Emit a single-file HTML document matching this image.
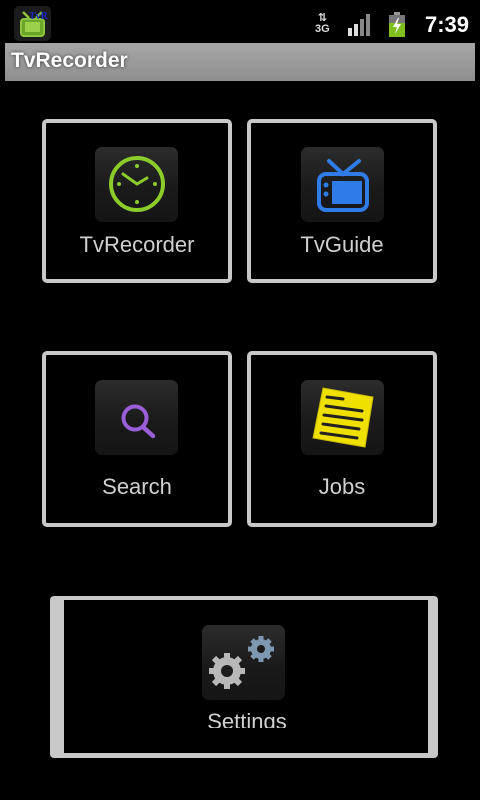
<!DOCTYPE html>
<html><head><meta charset="utf-8"><style>
*{margin:0;padding:0;box-sizing:border-box}
body{width:480px;height:800px;background:#000;position:relative;overflow:hidden;font-family:"Liberation Sans","DejaVu Sans",sans-serif}
.abs{position:absolute}
.box{position:absolute;border:4px solid #c8c8c8;border-radius:5px;background:#000}
.tile{position:absolute;width:83px;height:75px;border-radius:7px;background:linear-gradient(#2c2c2c,#1a1a1a 55%,#151515)}
.lbl{position:absolute;color:#d0d0d0;font-size:22px;text-align:center;width:190px}
</style></head><body>
<div class="abs" style="left:14px;top:6px;width:37px;height:35px;border-radius:5px;background:#1c1c1c"></div>
<svg class="abs" style="left:14px;top:6px" width="37" height="35" viewBox="0 0 37 35">
<path d="M9 6 L15 12 M28 6 L22 12" stroke="#8cc63f" stroke-width="2.5"/>
<rect x="7" y="13" width="23" height="17" rx="3" fill="#6aa52a" stroke="#8cc63f" stroke-width="2"/>
<rect x="11" y="16" width="15" height="10" fill="#9ad04a"/>
<text x="15" y="13" font-size="10" font-weight="bold" fill="#1a2cc8" font-family="Liberation Serif">TvR</text>
</svg>
<div class="abs" style="left:315px;top:13px;color:#ddd;font-size:11px;font-weight:bold;line-height:11px;text-align:center">⇅<br>3G</div>
<svg class="abs" style="left:348px;top:14px" width="25" height="22"><rect x="0" y="14" width="4" height="8" fill="#ddd"/><rect x="6" y="10" width="4" height="12" fill="#ddd"/><rect x="12" y="5" width="4" height="17" fill="#888"/><rect x="18" y="0" width="4" height="22" fill="#888"/></svg>
<svg class="abs" style="left:389px;top:12px" width="16" height="25"><rect x="5" y="0" width="6" height="3" fill="#999"/><rect x="0" y="3" width="16" height="22" fill="#7fbf1f"/><rect x="0" y="3" width="16" height="8" fill="#777"/><path d="M9 6 L4 15 L8 15 L6 22 L12 12 L8 12 L10 6Z" fill="#fff"/></svg>
<div class="abs" style="left:425px;top:12px;color:#fff;font-size:22px;font-weight:bold">7:39</div>
<div class="abs" style="left:5px;top:43px;width:470px;height:38px;background:linear-gradient(#a6a6a6,#8e8e8e);"></div>
<div class="abs" style="left:11px;top:49px;color:#fff;font-size:21px;font-weight:bold;text-shadow:0 0 3px #333">TvRecorder</div>

<div class="box" style="left:42px;top:119px;width:190px;height:164px"></div>
<div class="box" style="left:247px;top:119px;width:190px;height:164px"></div>
<div class="box" style="left:42px;top:351px;width:190px;height:176px"></div>
<div class="box" style="left:247px;top:351px;width:190px;height:176px"></div>
<div class="abs" style="left:50px;top:596px;width:388px;height:162px;background:#c8c8c8;border-radius:4px"></div>
<div class="abs" style="left:64px;top:600px;width:364px;height:153px;background:#000"></div>

<div class="tile" style="left:95px;top:147px"></div>
<svg class="abs" style="left:95px;top:147px" width="83" height="75">
<circle cx="42" cy="37" r="26" fill="none" stroke="#8ccc2a" stroke-width="4"/>
<circle cx="42" cy="19" r="2" fill="#8ccc2a"/><circle cx="42" cy="55" r="2" fill="#8ccc2a"/><circle cx="24" cy="37" r="2" fill="#8ccc2a"/><circle cx="60" cy="37" r="2" fill="#8ccc2a"/>
<path d="M28 27 L42 37 L52 31" stroke="#8ccc2a" stroke-width="3" fill="none" stroke-linecap="round"/>
</svg>
<div class="lbl" style="left:42px;top:232px">TvRecorder</div>

<div class="tile" style="left:301px;top:147px"></div>
<svg class="abs" style="left:301px;top:147px" width="83" height="75">
<path d="M28 14 L42 27 L58 14" stroke="#2f7ce8" stroke-width="4" fill="none" stroke-linecap="round"/>
<rect x="18" y="27" width="48" height="36" rx="7" fill="none" stroke="#2f7ce8" stroke-width="4"/>
<rect x="31" y="34" width="30" height="23" fill="#2f7ce8"/>
<circle cx="25" cy="38" r="2.5" fill="#2f7ce8"/><circle cx="25" cy="47" r="2.5" fill="#2f7ce8"/>
</svg>
<div class="lbl" style="left:247px;top:232px">TvGuide</div>

<div class="tile" style="left:95px;top:380px"></div>
<svg class="abs" style="left:95px;top:380px" width="83" height="75">
<circle cx="40" cy="38" r="11.5" fill="none" stroke="#9a5ed8" stroke-width="4"/>
<path d="M48 47 L58 56" stroke="#9a5ed8" stroke-width="4.5" stroke-linecap="round"/>
</svg>
<div class="lbl" style="left:42px;top:474px">Search</div>

<div class="tile" style="left:301px;top:380px"></div>
<svg class="abs" style="left:301px;top:380px" width="83" height="75">
<path d="M22 8 L72 17 L64 67 L12 58Z" fill="#f0e000" stroke="#c8b800" stroke-width="1"/>
<g stroke="#222" stroke-width="3" stroke-linecap="round"><path d="M26 17 L42 19"/><path d="M25 26 L61 31"/><path d="M23 35 L61 40"/><path d="M22 44 L58 49"/><path d="M20 53 L56 58"/></g>
</svg>
<div class="lbl" style="left:247px;top:474px">Jobs</div>

<div class="tile" style="left:202px;top:625px"></div>
<svg class="abs" style="left:202px;top:625px" width="83" height="75">
<g fill="#b8b8b8"><circle cx="25" cy="46" r="14"/>
<g stroke="#b8b8b8" stroke-width="6"><path d="M25 28 V64 M7 46 H43 M12 33 L38 59 M38 33 L12 59"/></g></g>
<circle cx="25" cy="46" r="6" fill="#1c1c1c"/>
<g fill="#7d98b0"><circle cx="59" cy="24" r="10"/>
<g stroke="#7d98b0" stroke-width="5"><path d="M59 11 V37 M46 24 H72 M50 15 L68 33 M68 15 L50 33"/></g></g>
<circle cx="59" cy="24" r="4" fill="#1c1c1c"/>
</svg>
<div class="abs" style="left:64px;top:600px;width:364px;height:128px;overflow:hidden">
<div class="lbl" style="left:88px;top:109px">Settings</div></div>
</body></html>
